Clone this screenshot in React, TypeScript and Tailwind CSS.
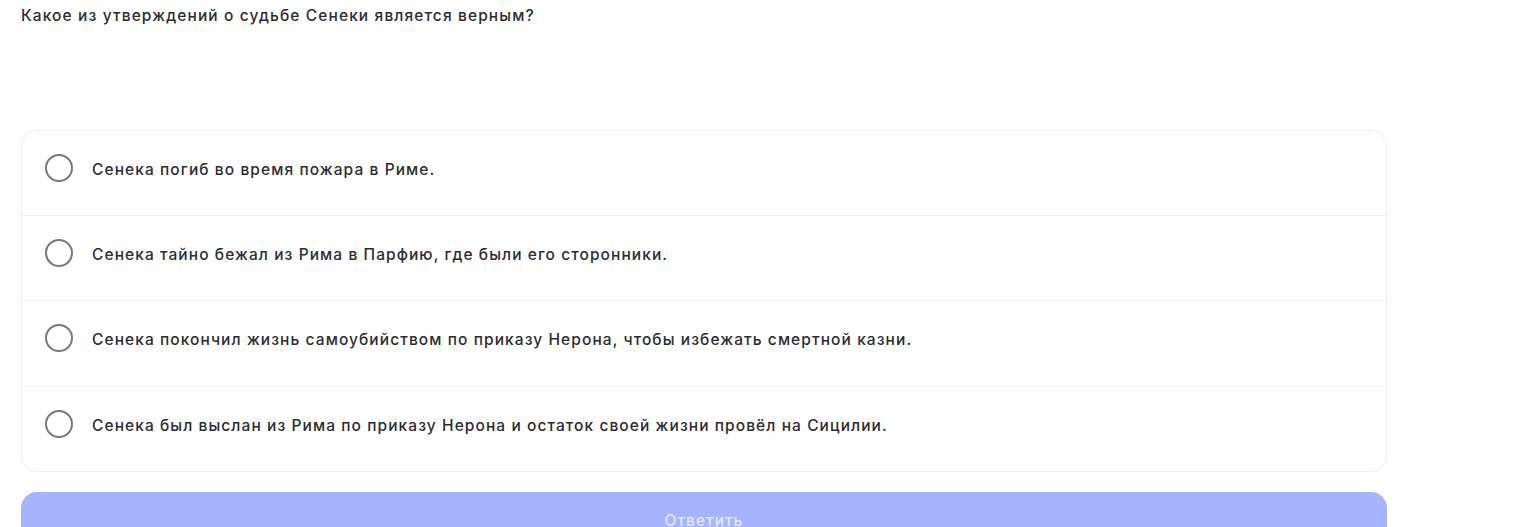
const options = [
  'Сенека погиб во время пожара в Риме.',
  'Сенека тайно бежал из Рима в Парфию, где были его сторонники.',
  'Сенека покончил жизнь самоубийством по приказу Нерона, чтобы избежать смертной казни.',
  'Сенека был выслан из Рима по приказу Нерона и остаток своей жизни провёл на Сицилии.',
]

export default function App() {
  return (
    <div className="min-h-screen bg-white font-['Inter',sans-serif] text-[#2b2b33]">
      <div className="ml-[21px] w-[1366px] pt-[5px]">
        <p className="text-[15.5px] font-medium leading-[22px] tracking-[1.12px]">
          Какое из утверждений о судьбе Сенеки является верным?
        </p>
        <div className="mt-[103px] rounded-2xl border border-[#efeff2] bg-white">
          {options.map((o, i) => (
            <label
              key={i}
              className={`flex cursor-pointer items-center gap-[19px] pl-[23px] pr-6 pt-[23px] pb-[33px] ${i > 0 ? 'border-t border-[#efeff2]' : ''} ${i === 2 ? 'pb-[34px]' : ''}`}
            >
              <span className="h-[28px] w-[28px] shrink-0 rounded-full border-[2.5px] border-[#78787f]" />
              <span className="mt-[3px] text-[15.5px] font-medium leading-[22px] tracking-[1.08px]">{o}</span>
            </label>
          ))}
        </div>
        <button className="mt-[20px] flex h-[56px] w-full items-center justify-center rounded-2xl bg-[#a5b4fc] pt-[2px] text-[15.5px] font-medium tracking-[1px] text-[#e6eaff]">
          Ответить
        </button>
      </div>
    </div>
  )
}
